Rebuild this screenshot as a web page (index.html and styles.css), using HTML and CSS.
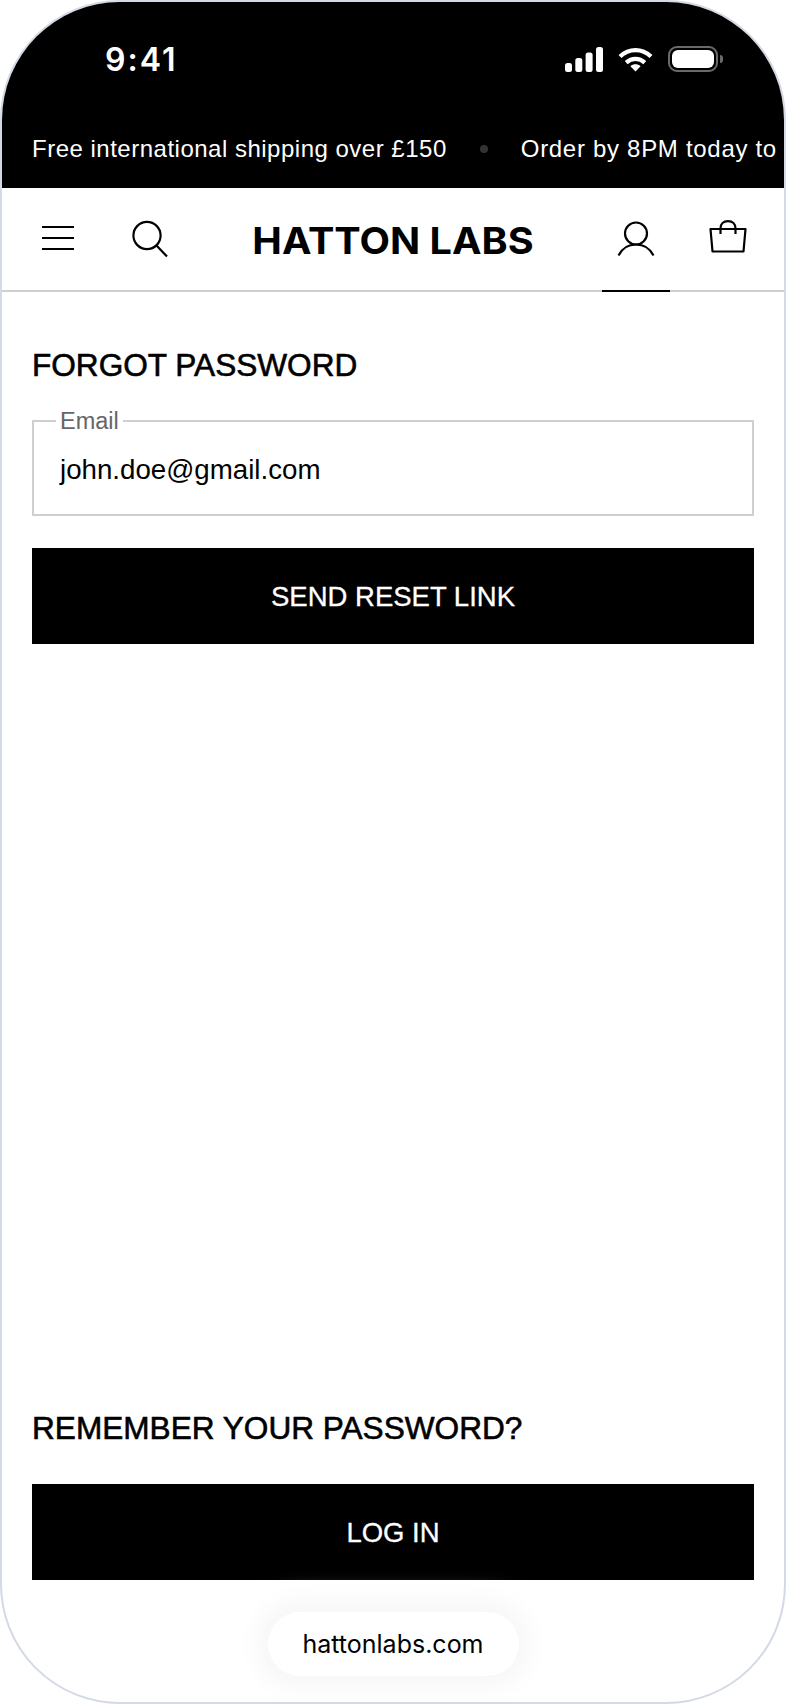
FILE: index.html
```html
<!DOCTYPE html>
<html lang="en">
<head>
    <meta charset="UTF-8">
    <meta name="viewport" content="width=device-width, initial-scale=1.0">
    <title>Forgot Password - Hatton Labs</title>
    <link rel="stylesheet" href="styles.css">
</head>
<body>
    <div class="phone">
        <header class="top">
            <div class="status">
                <span class="time">9:41</span>
                <div class="status-icons">
                    <svg class="signal" width="38" height="25" viewBox="0 0 38 25" fill="#fff">
                        <rect x="0" y="16" width="7" height="9" rx="2.5"/>
                        <rect x="10.3" y="11" width="7" height="14" rx="2.5"/>
                        <rect x="20.6" y="5.5" width="7" height="19.5" rx="2.5"/>
                        <rect x="31" y="0" width="7" height="25" rx="2.5"/>
                    </svg>
                    <svg class="wifi" width="35" height="25" viewBox="0 0 35 25" fill="none" stroke="#fff" stroke-width="4.2">
                        <path d="M2 9.5C11 1 24 1 33 9.5"/>
                        <path d="M8.2 15.6C13.7 10.5 21.3 10.5 26.8 15.6"/>
                        <path d="M12.4 19.2 17.5 24.6 22.6 19.2C19.6 16.6 15.4 16.6 12.4 19.2Z" fill="#fff" stroke="none"/>
                    </svg>
                    <div class="battery"><div class="battery-fill"></div></div>
                </div>
            </div>
            <div class="promo">
                <span>Free international shipping over £150</span>
                <i class="promo-dot"></i>
                <span class="promo-next">Order by 8PM today to</span>
            </div>
        </header>

        <nav class="nav">
            <a class="nav-icon" href="#menu">
                <svg class="menu-icon" width="34" height="26" viewBox="0 0 34 26" stroke="#000" stroke-width="2"><path d="M1 2H33M1 13H33M1 24H33"/></svg>
            </a>
            <a class="nav-icon" href="#search">
                <svg width="38" height="38" viewBox="0 0 38 38" fill="none" stroke="#000" stroke-width="2.2"><circle cx="16" cy="15.500" r="13.600"/><path d="M25.500 25.500 36 36.500"/></svg>
            </a>
            <a class="logo" href="#home">HATTON LABS</a>
            <a class="nav-icon active" href="#account">
                <svg width="38" height="38" viewBox="0 0 38 38" fill="none" stroke="#000" stroke-width="2.2"><circle cx="19" cy="12.500" r="11"/><path d="M1.500 34.500C5 27.500 11 23.500 19 23.500S33 27.500 36.500 34.500"/></svg>
            </a>
            <a class="nav-icon" href="#bag">
                <svg class="bag-icon" width="38" height="33" viewBox="0 0 38 33" fill="none" stroke="#000" stroke-width="2.2" stroke-linejoin="round"><path d="M1.500 9H36.500L34.500 31.500H3.500Z"/><path d="M11.500 14V8.500C11.500 4 14.500 1.200 19 1.200S26.500 4 26.500 8.500V14"/></svg>
            </a>
        </nav>

        <main class="content">
            <section class="reset">
                <h2 class="title">FORGOT PASSWORD</h2>
                <fieldset class="field">
                    <legend>Email</legend>
                    <span class="field-value">john.doe@gmail.com</span>
                </fieldset>
                <a class="btn" href="#send">SEND RESET LINK</a>
            </section>
            <section class="remember">
                <h2 class="title">REMEMBER YOUR PASSWORD?</h2>
                <a class="btn" href="#login">LOG IN</a>
            </section>
        </main>

        <footer class="url-wrap">
            <div class="url">hattonlabs.com</div>
        </footer>
    </div>
</body>
</html>
```

FILE: styles.css
```css
* {
    box-sizing: border-box;
}

body {
    margin: 0;
    background-color: #fff;
    font-family: "Liberation Sans", Arial, sans-serif;
    color: #000;
}

a {
    color: inherit;
    text-decoration: none;
}

.phone {
    width: 786px;
    height: 1704px;
    display: flex;
    flex-direction: column;
    border: 2px solid #d3d9e5;
    border-radius: 120px;
    overflow: hidden;
}

.top {
    background-color: #000;
    color: #fff;
    height: 186px;
}

.status {
    height: 119px;
    padding: 42px 66px 0 103px;
    display: flex;
    justify-content: space-between;
    align-items: flex-start;
}

.time {
    font-family: Inter, sans-serif;
    font-weight: 600;
    font-size: 32px;
    line-height: 32px;
    letter-spacing: 2px;
}

.status-icons {
    display: flex;
    align-items: center;
    gap: 15px;
    margin-top: 2px;
}

.signal,
.wifi {
    display: block;
}

.battery {
    position: relative;
    width: 50px;
    height: 26px;
    border: 2px solid #6a6a6a;
    border-radius: 9px;
    padding: 2px;
}

.battery::after {
    content: "";
    position: absolute;
    right: -7px;
    top: 7px;
    width: 3px;
    height: 8px;
    background-color: #6a6a6a;
    border-radius: 0 3px 3px 0;
}

.battery-fill {
    height: 100%;
    background-color: #fff;
    border-radius: 6px;
}

.promo {
    display: flex;
    align-items: center;
    gap: 33px;
    padding-left: 30px;
    height: 56px;
    font-size: 24px;
    letter-spacing: 0.5px;
    white-space: nowrap;
}

.promo-next {
    letter-spacing: 0.7px;
}

.promo-dot {
    flex: none;
    width: 8px;
    height: 8px;
    border-radius: 50%;
    background-color: #333;
}

.nav {
    height: 104px;
    flex: none;
    display: flex;
    align-items: stretch;
    gap: 24px;
    padding: 0 22px;
    border-bottom: 2px solid #cfcfd3;
}

.nav-icon {
    width: 68px;
    display: flex;
    align-items: center;
    justify-content: center;
}

.nav-icon.active {
    border-bottom: 2px solid #000;
    margin-bottom: -2px;
    padding-top: 2px;
}

.menu-icon {
    margin-bottom: 2px;
}

.bag-icon {
    margin-bottom: 5px;
}

.logo {
    flex: 1;
    display: flex;
    align-items: center;
    justify-content: center;
    padding-top: 2px;
    font-family: Inter, sans-serif;
    font-size: 37px;
    font-weight: 700;
    white-space: nowrap;
    transform: scaleX(1.07);
}

.content {
    flex: 1;
    display: flex;
    flex-direction: column;
    justify-content: space-between;
    padding: 55px 30px 0;
}

.title {
    margin: 0;
    font-size: 31.6px;
    line-height: 36px;
    font-weight: normal;
    -webkit-text-stroke: 0.6px #000;
}

.field {
    margin: 25px 0 0;
    padding: 0 26px;
    height: 108px;
    border: 2px solid #cfcfd3;
}

.field legend {
    padding: 0 4px;
    margin-left: -4px;
    font-size: 23.5px;
    line-height: 26px;
    color: #666;
}

.field-value {
    display: block;
    margin-top: 19px;
    font-size: 27.7px;
    line-height: 34px;
}

.btn {
    display: flex;
    align-items: center;
    justify-content: center;
    height: 96px;
    margin-top: 32px;
    padding-top: 2px;
    background-color: #000;
    color: #fff;
    font-size: 27.5px;
    -webkit-text-stroke: 0.3px #fff;
}

.remember .btn {
    margin-top: 38px;
}

.url-wrap {
    flex: none;
    height: 122px;
    display: flex;
    justify-content: center;
    padding-top: 32px;
}

.url {
    width: 251px;
    height: 64px;
    border-radius: 32px;
    display: flex;
    align-items: center;
    justify-content: center;
    background-color: #fff;
    font-family: Inter, sans-serif;
    font-size: 25px;
    box-shadow: 0 0 0 1px #f8f8f8, 0 0 24px 12px #f7f7f7;
}
```
